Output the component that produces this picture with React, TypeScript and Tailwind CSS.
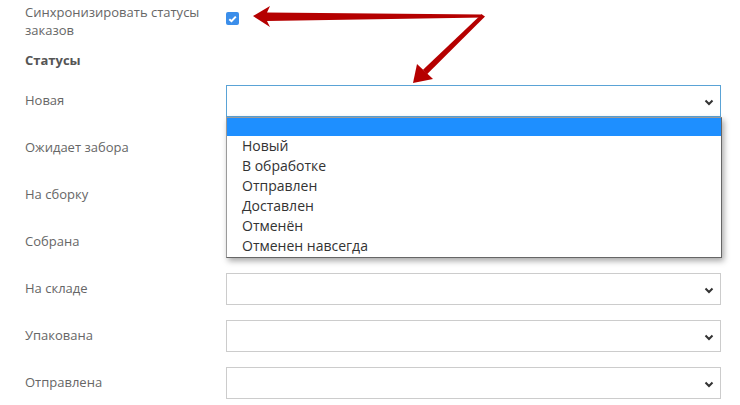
import React from "react";

const rows = [
  "Новая",
  "Ожидает забора",
  "На сборку",
  "Собрана",
  "На складе",
  "Упакована",
  "Отправлена",
];

const options = [
  "Новый",
  "В обработке",
  "Отправлен",
  "Доставлен",
  "Отменён",
  "Отменен навсегда",
];

function Chevron() {
  return (
    <svg width="10" height="7" viewBox="0 0 10 7" className="absolute right-[6px] top-[13px]">
      <polyline points="1.5,1.5 5,5 8.5,1.5" fill="none" stroke="#333" strokeWidth="2" />
    </svg>
  );
}

export default function App() {
  return (
    <div
      className="relative w-[740px] h-[405px] bg-white overflow-hidden text-[#666]"
      style={{ fontFamily: '"Open Sans", "Liberation Sans", sans-serif' }}
    >
      <div className="pl-[25px] pt-[3px]">
        <div className="flex">
          <div className="w-[201px] text-[13px] leading-[18px]">
            Синхронизировать статусы
            <br />
            заказов
          </div>
          <div className="mt-[9px] w-[13px] h-[13px] rounded-[2px] bg-[#3b8eea] flex items-center justify-center">
            <svg width="9" height="8" viewBox="0 0 9 8">
              <polyline points="1.3,4.2 3.5,6.2 7.8,1.6" fill="none" stroke="white" strokeWidth="2" />
            </svg>
          </div>
        </div>
        <div className="mt-[12px] text-[13px] leading-[18px] font-bold text-[#555]">Статусы</div>
        <div className="mt-[16px] flex flex-col gap-[15px]">
          {rows.map((r, i) => (
            <div key={r} className="flex items-center h-[32px]">
              <div className="w-[201px] text-[13px]">{r}</div>
              <div
                className={
                  "relative w-[495px] h-[32px] border bg-white " +
                  (i === 0 ? "border-[#5aa3d6]" : "border-[#ccc]")
                }
              >
                <Chevron />
                {i === 0 && (
                  <div className="absolute left-[-1px] top-[31px] w-[496px] z-10 bg-white border border-[#9a9a9a] border-r-[#666] border-b-[#666] shadow-[2px_3px_6px_rgba(0,0,0,0.35)] pb-[1px] text-[14px] text-[#333]">
                    <div className="h-[18px] bg-[#1e8fff]" />
                    {options.map((o) => (
                      <div key={o} className="pl-[15px] leading-[20px] h-[20px]">
                        {o}
                      </div>
                    ))}
                  </div>
                )}
              </div>
            </div>
          ))}
        </div>
      </div>
      <svg className="absolute left-0 top-0 z-20 pointer-events-none" width="740" height="405" viewBox="0 0 740 405">
        <polygon
          points="253,16 270,6 267,12.5 482,14.5 484,17.5 267,21 270,27"
          fill="#b50000"
        />
        <polygon
          points="481.5,14.2 485,16.5 427,74.3 423,69.8"
          fill="#b50000"
        />
        <polygon points="413,83 417,64 433,79" fill="#b50000" />
      </svg>
    </div>
  );
}
